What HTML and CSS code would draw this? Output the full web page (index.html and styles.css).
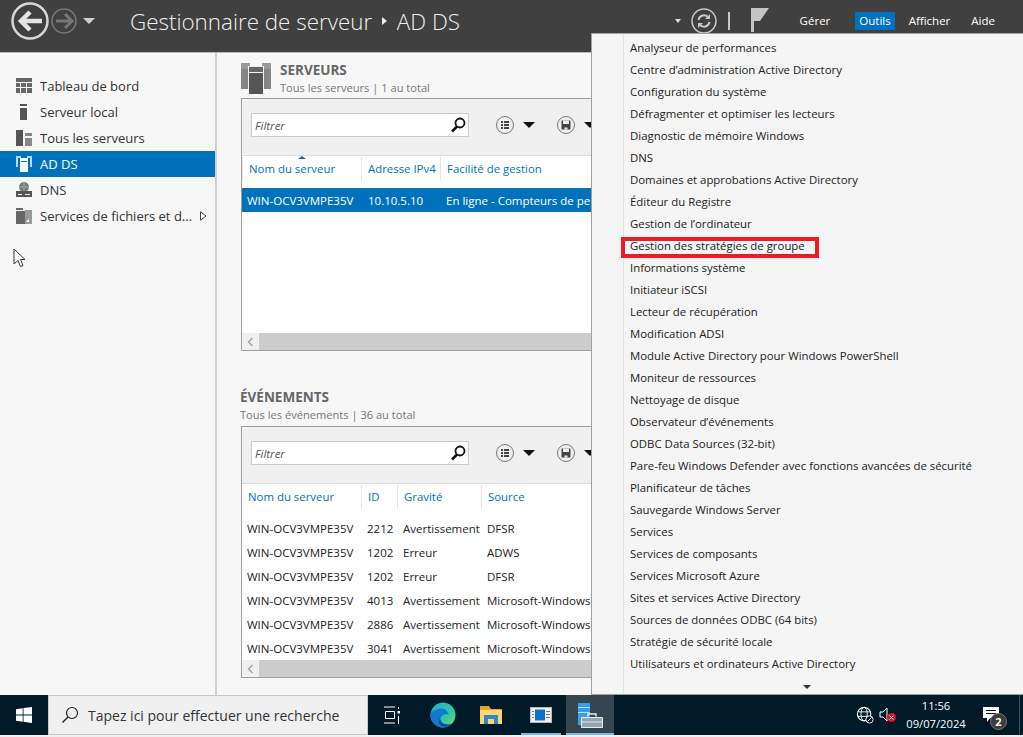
FILE: index.html
```html
<!DOCTYPE html>
<html lang="fr">
<head>
    <meta charset="UTF-8">
    <meta name="viewport" content="width=device-width, initial-scale=1.0">
    <title>Gestionnaire de serveur</title>
    <link rel="stylesheet" href="styles.css">
</head>
<body>
    <header class="topbar">
        <div class="nav">
            <svg class="nav-back" width="38" height="38" viewBox="0 0 38 38"><circle cx="19" cy="19" r="17.5" fill="none" stroke="#d8d8d8" stroke-width="2.5"/><path d="M31 19H12M19 10l-9 9 9 9" fill="none" stroke="#e4e4e4" stroke-width="4.5"/></svg>
            <svg class="nav-forward" width="26" height="26" viewBox="0 0 26 26"><circle cx="13" cy="13" r="12" fill="none" stroke="#777" stroke-width="1.6"/><path d="M5 13h15M14 6l7 7-7 7" fill="none" stroke="#777" stroke-width="3"/></svg>
            <span class="caret caret-light"></span>
        </div>
        <div class="title">Gestionnaire de serveur <span class="title-sep"></span> AD DS</div>
        <div class="actions">
            <span class="caret caret-small"></span>
            <svg class="refresh" width="26" height="26" viewBox="0 0 26 26"><circle cx="13" cy="13" r="12" fill="none" stroke="#c8c8c8" stroke-width="1.5"/><path d="M7.5 12a5.6 5.6 0 0 1 9.8-2.6M18.500 14a5.600 5.600 0 0 1-9.800 2.600" fill="none" stroke="#c8c8c8" stroke-width="2"/><path d="M19 6v5h-5zM7 20v-5h5z" fill="#c8c8c8"/></svg>
            <span class="divider"></span>
            <svg class="flag" width="18" height="24" viewBox="0 0 18 24"><path d="M0 0h3v24H0zM3 0h15L9 13H3z" fill="#c4c4c4"/></svg>
        </div>
        <nav class="menubar">
            <span class="menubar-item item-manage">Gérer</span>
            <span class="menubar-item is-open">Outils</span>
            <span class="menubar-item item-view">Afficher</span>
            <span class="menubar-item">Aide</span>
        </nav>
    </header>

    <div class="main">
        <aside class="sidebar">
            <div class="side-item">
                <svg class="side-icon" width="16" height="16" viewBox="0 0 16 16"><path d="M0 0h16v4H0zM0 5h4v4H0zM5 5h5v4H5zM11 5h5v4h-5zM0 10h4v5H0zM5 10h5v5H5zM11 10h5v5h-5z" fill="#666"/></svg>
                Tableau de bord
            </div>
            <div class="side-item">
                <svg class="side-icon" width="16" height="16" viewBox="0 0 16 16"><path d="M4 0h7v2H4zM4 4h7v12H4z" fill="#555"/></svg>
                Serveur local
            </div>
            <div class="side-item">
                <svg class="side-icon" width="16" height="16" viewBox="0 0 16 16"><path d="M0 0h7v16H0z" fill="#555"/><path d="M9 3h7v3H9zM9 8h7v8H9z" fill="#888"/></svg>
                Tous les serveurs
            </div>
            <div class="side-item is-active">
                <svg class="side-icon" width="16" height="16" viewBox="0 0 16 16"><path d="M0 0h5v2H2v9H0zM11 0h5v11h-2V2h-3z" fill="#b9d7ee"/><path d="M4 2h8v14H4z" fill="#fff"/><path d="M5 5h6v1H5z" fill="#0072bc"/></svg>
                AD DS
            </div>
            <div class="side-item">
                <svg class="side-icon" width="16" height="16" viewBox="0 0 16 16"><circle cx="8" cy="5" r="5" fill="#777"/><path d="M3 5h10M8 0v10" stroke="#aaa"/><path d="M0 9h16v6H0z" fill="#555"/><path d="M2 12h4v1H2zM9 12h5v1H9z" fill="#eee"/></svg>
                DNS
            </div>
            <div class="side-item">
                <svg class="side-icon" width="16" height="16" viewBox="0 0 16 16"><path d="M0 0h7v2H0zM0 3h10v13H0z" fill="#666"/><path d="M9 2h7v14H9z" fill="#999"/><path d="M13 11v3h-3z" fill="#fff"/></svg>
                <span class="side-label">Services de fichiers et d...</span>
                <svg class="side-arrow" width="7" height="10" viewBox="0 0 7 10"><path d="M.5.800v8.400L6 5z" fill="#fff" stroke="#444"/></svg>
            </div>
            <svg class="cursor" width="13" height="20" viewBox="0 0 13 20"><path d="M1 1v15l4-3.500 2.500 6 2.500-1-2.500-6H12z" fill="#fff" stroke="#333"/></svg>
        </aside>

        <section class="content">
            <div class="section-head has-icon">
                <svg class="section-icon" width="30" height="32" viewBox="0 0 30 32"><path d="M0 1h9v6H0zM21 1h9v6h-9z" fill="#9a9a9a"/><path d="M0 7h9v20H0zM21 7h9v20h-9z" fill="#858585"/><path d="M7 4h16v28H7z" fill="#f0f0f0"/><path d="M8 5h14v5H8z" fill="#666"/><path d="M8 11h14v21H8z" fill="#555"/></svg>
                <div>
                    <div class="section-title">SERVEURS</div>
                    <div class="section-sub">Tous les serveurs | 1 au total</div>
                </div>
            </div>
            <div class="panel panel-servers">
                <div class="toolbar">
                    <div class="filter">
                        <span>Filtrer</span>
                        <svg width="16" height="16" viewBox="0 0 16 16"><circle cx="10" cy="6" r="4.500" fill="none" stroke="#111" stroke-width="1.800"/><path d="M7 9.500L2 14.500" stroke="#111" stroke-width="2.500"/></svg>
                    </div>
                    <svg class="tool-icon" width="20" height="20" viewBox="0 0 20 20"><circle cx="10" cy="10" r="8.500" fill="none" stroke="#777"/><path d="M6 6h2v2H6zM9 6h5v2H9zM6 9h2v2H6zM9 9h5v2H9zM6 12h2v2H6zM9 12h5v2H9z" fill="#444"/></svg>
                    <span class="caret caret-dark"></span>
                    <svg class="tool-icon tool-save" width="20" height="20" viewBox="0 0 20 20"><circle cx="10" cy="10" r="8.500" fill="none" stroke="#777"/><path d="M5.500 5.500h9v9h-9z" fill="#444"/><path d="M7 5.500h6v3.500H7zM8.500 12.500h3v2h-3z" fill="#eee"/></svg>
                    <span class="caret caret-dark"></span>
                </div>
                <div class="grid-row grid-head cols-servers">
                    <span class="sort-arrow"></span>
                    <span>Nom du serveur</span>
                    <span>Adresse IPv4</span>
                    <span>Facilité de gestion</span>
                </div>
                <div class="grid-row grid-cells cols-servers is-selected">
                    <span>WIN-OCV3VMPE35V</span>
                    <span>10.10.5.10</span>
                    <span>En ligne - Compteurs de pe</span>
                </div>
                <div class="scrollbar"><span class="scroll-btn"><svg width="7" height="10" viewBox="0 0 7 10"><path d="M5.500 1L1.500 5l4 4" fill="none" stroke="#a0a0a0" stroke-width="1.300"/></svg></span></div>
            </div>

            <div class="section-head events-head">
                <div>
                    <div class="section-title">ÉVÉNEMENTS</div>
                    <div class="section-sub">Tous les événements | 36 au total</div>
                </div>
            </div>
            <div class="panel panel-events">
                <div class="toolbar">
                    <div class="filter">
                        <span>Filtrer</span>
                        <svg width="16" height="16" viewBox="0 0 16 16"><circle cx="10" cy="6" r="4.500" fill="none" stroke="#111" stroke-width="1.800"/><path d="M7 9.500L2 14.500" stroke="#111" stroke-width="2.500"/></svg>
                    </div>
                    <svg class="tool-icon" width="20" height="20" viewBox="0 0 20 20"><circle cx="10" cy="10" r="8.500" fill="none" stroke="#777"/><path d="M6 6h2v2H6zM9 6h5v2H9zM6 9h2v2H6zM9 9h5v2H9zM6 12h2v2H6zM9 12h5v2H9z" fill="#444"/></svg>
                    <span class="caret caret-dark"></span>
                    <svg class="tool-icon tool-save" width="20" height="20" viewBox="0 0 20 20"><circle cx="10" cy="10" r="8.500" fill="none" stroke="#777"/><path d="M5.500 5.500h9v9h-9z" fill="#444"/><path d="M7 5.500h6v3.500H7zM8.500 12.500h3v2h-3z" fill="#eee"/></svg>
                    <span class="caret caret-dark"></span>
                </div>
                <div class="grid-row grid-head cols-events">
                    <span>Nom du serveur</span>
                    <span>ID</span>
                    <span>Gravité</span>
                    <span>Source</span>
                </div>
                <div class="grid-row grid-cells cols-events"><span>WIN-OCV3VMPE35V</span><span>2212</span><span>Avertissement</span><span>DFSR</span></div>
                <div class="grid-row grid-cells cols-events"><span>WIN-OCV3VMPE35V</span><span>1202</span><span>Erreur</span><span>ADWS</span></div>
                <div class="grid-row grid-cells cols-events"><span>WIN-OCV3VMPE35V</span><span>1202</span><span>Erreur</span><span>DFSR</span></div>
                <div class="grid-row grid-cells cols-events"><span>WIN-OCV3VMPE35V</span><span>4013</span><span>Avertissement</span><span>Microsoft-Windows</span></div>
                <div class="grid-row grid-cells cols-events"><span>WIN-OCV3VMPE35V</span><span>2886</span><span>Avertissement</span><span>Microsoft-Windows</span></div>
                <div class="grid-row grid-cells cols-events"><span>WIN-OCV3VMPE35V</span><span>3041</span><span>Avertissement</span><span>Microsoft-Windows</span></div>
                <div class="scrollbar"><span class="scroll-btn"><svg width="7" height="10" viewBox="0 0 7 10"><path d="M5.500 1L1.500 5l4 4" fill="none" stroke="#a0a0a0" stroke-width="1.300"/></svg></span></div>
            </div>
        </section>
    </div>

    <div class="tools-menu">
        <div class="tools-item">Analyseur de performances</div>
        <div class="tools-item">Centre d’administration Active Directory</div>
        <div class="tools-item">Configuration du système</div>
        <div class="tools-item">Défragmenter et optimiser les lecteurs</div>
        <div class="tools-item">Diagnostic de mémoire Windows</div>
        <div class="tools-item">DNS</div>
        <div class="tools-item">Domaines et approbations Active Directory</div>
        <div class="tools-item">Éditeur du Registre</div>
        <div class="tools-item">Gestion de l’ordinateur</div>
        <div class="tools-item is-marked">Gestion des stratégies de groupe</div>
        <div class="tools-item">Informations système</div>
        <div class="tools-item">Initiateur iSCSI</div>
        <div class="tools-item">Lecteur de récupération</div>
        <div class="tools-item">Modification ADSI</div>
        <div class="tools-item">Module Active Directory pour Windows PowerShell</div>
        <div class="tools-item">Moniteur de ressources</div>
        <div class="tools-item">Nettoyage de disque</div>
        <div class="tools-item">Observateur d’événements</div>
        <div class="tools-item">ODBC Data Sources (32-bit)</div>
        <div class="tools-item">Pare-feu Windows Defender avec fonctions avancées de sécurité</div>
        <div class="tools-item">Planificateur de tâches</div>
        <div class="tools-item">Sauvegarde Windows Server</div>
        <div class="tools-item">Services</div>
        <div class="tools-item">Services de composants</div>
        <div class="tools-item">Services Microsoft Azure</div>
        <div class="tools-item">Sites et services Active Directory</div>
        <div class="tools-item">Sources de données ODBC (64 bits)</div>
        <div class="tools-item">Stratégie de sécurité locale</div>
        <div class="tools-item">Utilisateurs et ordinateurs Active Directory</div>
        <div class="tools-more"><span class="caret caret-dark caret-tiny"></span></div>
    </div>

    <footer class="taskbar">
        <div class="start">
            <svg width="16" height="16" viewBox="0 0 16 16"><path d="M0 2.200l6.700-1v6.300H0zM7.500 1l8.500-1v7.500H7.500zM0 8.500h6.700v6.300l-6.700-1zM7.500 8.500H16V16l-8.500-1.200z" fill="#fff"/></svg>
        </div>
        <div class="search">
            <svg width="18" height="18" viewBox="0 0 18 18"><circle cx="11" cy="7" r="5.500" fill="none" stroke="#222" stroke-width="1.200"/><path d="M7 11l-5.500 5.500" stroke="#222" stroke-width="1.500"/></svg>
            <span>Tapez ici pour effectuer une recherche</span>
        </div>
        <div class="task-apps">
            <div class="task-app task-view">
                <svg width="18" height="18" viewBox="0 0 18 18"><path d="M1 1h11M1 17h11M2.500 5.500h9v7h-9z" fill="none" stroke="#fff"/><path d="M15 1h1v2h-1zM14.500 5h2.500v2.500h-2.500zM15 10h1v8h-1z" fill="#fff"/></svg>
            </div>
            <div class="task-app">
                <svg width="26" height="26" viewBox="0 0 26 26"><defs><linearGradient id="edgeTop" x1="0" y1="0" x2="1" y2="1"><stop offset="0" stop-color="#1fa8d8"/><stop offset=".6" stop-color="#35c7a5"/><stop offset="1" stop-color="#6fdc5c"/></linearGradient></defs><circle cx="13" cy="13" r="12.500" fill="url(#edgeTop)"/><path d="M.5 13C.5 20 6 25.500 13 25.500c3.500 0 6.500-1.300 8.500-3.500-6 2.500-11-1-11-5 0-3.500 4-5.500 8-4.500-1-5-6-7-10-5.500C5 8 .5 9.500.5 13z" fill="#1478cc"/><path d="M10 16.500c0 4 5 7 11.500 5.500-3 2.800-8 3.500-10.500 1.500C8.500 22 8.500 18.500 10 16.500z" fill="#0a4a9c"/></svg>
            </div>
            <div class="task-app">
                <svg width="22" height="18" viewBox="0 0 22 18"><path d="M0 0h9l2 3h11v15H0z" fill="#e0a526"/><path d="M0 4h22v14H0z" fill="#ffd767"/><path d="M4 9h14v9H4z" fill="#2d86cf"/><path d="M8 13h6v5H8z" fill="#ffd767"/></svg>
            </div>
            <div class="task-app is-running">
                <svg width="22" height="16" viewBox="0 0 22 16"><path d="M0 0h22v16H0z" fill="#b8b8b8"/><path d="M1 1h20v14H1z" fill="#f3f3f3"/><path d="M5 2.500h10v11H5z" fill="#0a73d0"/><path d="M2 4h2v1H2zM2 7h2v1H2zM2 10h2v1H2zM16 4h4v1h-4zM16 7h4v1h-4zM16 10h4v1h-4z" fill="#777"/></svg>
            </div>
            <div class="task-app is-current">
                <svg width="26" height="26" viewBox="0 0 26 26"><path d="M1 1h12v22H1z" fill="#35a0ea"/><path d="M1 5h12v1H1zM1 10h12v1H1z" fill="#b5dcf7"/><path d="M4.500 15.500h21v10h-21z" fill="#8fa6b4" stroke="#e6ecef"/><path d="M11 14.500v-2.500h8v2.500" fill="none" stroke="#e6ecef" stroke-width="1.500"/><path d="M5 19.500h20v1H5z" fill="#dfe7eb"/></svg>
            </div>
        </div>
        <div class="tray">
            <svg class="tray-globe" width="18" height="18" viewBox="0 0 20 20"><circle cx="9" cy="9" r="7.500" fill="none" stroke="#fff" stroke-width="1.200"/><ellipse cx="9" cy="9" rx="3.500" ry="7.500" fill="none" stroke="#fff"/><path d="M2 6.500h14M2 11.500h14" stroke="#fff"/><circle cx="15" cy="15" r="4" fill="#001a28" stroke="#fff"/><path d="M12.500 17.500l5-5" stroke="#fff"/></svg>
            <svg class="tray-sound" width="18" height="16" viewBox="0 0 18 16"><path d="M1 5h3l4-4v13l-4-4H1z" fill="none" stroke="#fff"/><circle cx="12.500" cy="10.500" r="4.500" fill="#e81123"/><path d="M10.500 8.500l4 4M14.500 8.500l-4 4" stroke="#fff"/></svg>
            <div class="clock">
                <div>11:56</div>
                <div>09/07/2024</div>
            </div>
            <div class="notify">
                <svg width="18" height="16" viewBox="0 0 18 16"><path d="M0 0h16v11H7l-3 4v-4H0z" fill="#fff"/><path d="M3 3h10v1H3zM3 6h10v1H3z" fill="#001a28"/></svg>
                <span class="notify-badge">2</span>
            </div>
            <span class="tray-edge"></span>
        </div>
    </footer>
</body>
</html>
```

FILE: styles.css
```css
* {
    box-sizing: border-box;
}

body {
    font-family: "Open Sans", "Noto Sans", sans-serif;
    font-size: 11.5px;
    margin: 0;
    width: 1023px;
    height: 737px;
    overflow: hidden;
    background: #f0f0f0;
    color: #222;
    display: flex;
    flex-direction: column;
    position: relative;
}

.caret {
    display: inline-block;
    width: 0;
    height: 0;
    border-left: 6px solid transparent;
    border-right: 6px solid transparent;
    border-top: 6px solid #111;
}

.caret-light {
    border-top-color: #d0d0d0;
    margin-left: 4px;
}

.caret-small {
    border-width: 4px 3.5px 0;
    border-top-color: #ddd;
}

.caret-dark {
    border-top-color: #111;
}

.caret-tiny {
    border-width: 4px 4px 0;
    border-top-color: #333;
}

/* top bar */
.topbar {
    height: 53px;
    flex: none;
    background: #404040;
    border-bottom: 1px solid #bbb;
    display: flex;
    align-items: flex-start;
}

.nav {
    width: 130px;
    height: 42px;
    padding-left: 11px;
    display: flex;
    align-items: center;
    gap: 2px;
    flex: none;
}

.title {
    font-weight: 300;
    font-size: 22.4px;
    line-height: 44px;
    color: #f0f0f0;
    white-space: nowrap;
}

.title-sep {
    display: inline-block;
    width: 0;
    height: 0;
    margin: 0 4px 5px 4px;
    border-top: 4px solid transparent;
    border-bottom: 4px solid transparent;
    border-left: 5px solid #eee;
}

.actions {
    margin-left: auto;
    height: 42px;
    display: flex;
    align-items: center;
}

.refresh {
    margin-left: 10px;
}

.divider {
    width: 2px;
    height: 18px;
    margin-left: 11px;
    background: #c8c8c8;
}

.flag {
    margin-left: 21px;
    margin-top: -2px;
}

.menubar {
    display: flex;
    margin-left: 27px;
    padding-top: 12px;
    padding-right: 24px;
    color: #fff;
    font-size: 11.5px;
}

.menubar-item {
    height: 18px;
    line-height: 18px;
    padding: 0 4px;
    margin-right: 16px;
}

.menubar-item:last-child {
    margin-right: 0;
}

.menubar-item.item-manage {
    margin-right: 21px;
}

.menubar-item.item-view {
    margin-right: 13px;
}

.menubar-item.is-open {
    background: #0072c0;
    margin-right: 10px;
}

/* left column */
.main {
    height: 642px;
    flex: none;
    background: #f7f7f7;
    display: flex;
}

.sidebar {
    width: 217px;
    flex: none;
    padding-top: 20px;
    border-right: 2px solid #cfcfcf;
    color: #333;
    font-size: 13px;
}

.side-item {
    height: 26px;
    padding-left: 16px;
    display: flex;
    align-items: center;
    white-space: nowrap;
}

.side-item.is-active {
    background: #0072bc;
    color: #fff;
}

.side-icon {
    margin-right: 8px;
    flex: none;
}

.side-label {
    flex: none;
}

.side-arrow {
    margin-left: 8px;
    flex: none;
}

.cursor {
    display: block;
    margin: 19px 0 0 13px;
}

/* centre */
.content {
    width: 374px;
    flex: none;
    overflow: hidden;
    padding-left: 24px;
}

.section-head {
    height: 45px;
    display: flex;
    gap: 9px;
    align-items: flex-start;
    padding-top: 9px;
}

.section-icon {
    flex: none;
}

.section-title {
    font-weight: 700;
    font-size: 13.5px;
    line-height: 17px;
    color: #666;
}

.section-sub {
    font-size: 11.1px;
    line-height: 18px;
    color: #777;
}

.events-head {
    height: 75px;
    padding-top: 38px;
    margin-left: -1px;
}

.panel {
    width: 351px;
    background: #fff;
    border: 1px solid #a0a0a0;
    border-right: 0;
    display: flex;
    flex-direction: column;
}

.panel-servers {
    height: 253px;
}

.panel-events {
    height: 252px;
}

.toolbar {
    height: 57px;
    flex: none;
    background: #f0f0f0;
    border-bottom: 1px solid #ddd;
    padding: 14px 0 0 9px;
    display: flex;
    align-items: flex-start;
}

.filter {
    width: 218px;
    height: 24px;
    flex: none;
    background: #fff;
    border: 1px solid #ccc;
    padding: 0 2px 0 3px;
    display: flex;
    align-items: center;
    justify-content: space-between;
    font-style: italic;
    color: #555;
}

.tool-icon {
    margin: 2px 0 0 26px;
    flex: none;
}

.tool-save {
    margin-left: 21px;
}

.toolbar .caret {
    margin: 9px 0 0 8px;
    flex: none;
}

.grid-row {
    display: grid;
    align-items: center;
    white-space: nowrap;
}

.grid-row span {
    overflow: hidden;
}

.cols-servers {
    grid-template-columns: 119px 79px 1fr;
}

.cols-events {
    grid-template-columns: 119px 36px 84px 1fr;
}

.grid-head {
    height: 32px;
    color: #0072bc;
    position: relative;
    padding-bottom: 7px;
    font-size: 11.4px;
}

.grid-head span {
    padding-left: 6px;
    border-left: 1px solid #e6e6e6;
    line-height: 24px;
}

.grid-head span:first-of-type {
    border-left: 0;
}

.sort-arrow {
    position: absolute;
    left: 56px;
    top: 0;
    width: 0;
    padding: 0 !important;
    border-left: 4px solid transparent !important;
    border-right: 4px solid transparent;
    border-bottom: 3px solid #0072bc;
    line-height: 0 !important;
}

.grid-cells {
    height: 24px;
}

.grid-cells span {
    padding-left: 5px;
}

.grid-cells span + span {
    padding-left: 6px;
}

.cols-servers.grid-cells span:nth-child(2) {
    padding-left: 7px;
}

.is-selected {
    background: #0072bc;
    color: #fff;
}

.scrollbar {
    margin-top: auto;
    height: 17px;
    flex: none;
    background: #cdcdcd;
}

.scroll-btn {
    width: 17px;
    height: 17px;
    display: flex;
    align-items: center;
    justify-content: center;
    background: #f0f0f0;
}

/* Outils dropdown */
.tools-menu {
    position: absolute;
    left: 591px;
    top: 33px;
    width: 432px;
    height: 662px;
    padding: 3px 0 0 31px;
    background: linear-gradient(to right, #f5f5f5 31px, #e3e3e3 31px, #e3e3e3 32px, #f5f5f5 32px);
    border-left: 1px solid #a0a0a0;
    border-top: 1px solid #a0a0a0;
    border-bottom: 1px solid #a0a0a0;
    font-size: 11.4px;
    color: #222;
}

.tools-item {
    height: 22px;
    line-height: 22px;
    padding-left: 7px;
    position: relative;
    white-space: nowrap;
}

.tools-item.is-marked::after {
    content: "";
    box-sizing: border-box;
    position: absolute;
    left: -2px;
    top: 2px;
    width: 198px;
    height: 21px;
    border: 4px solid #ed1c24;
}

.tools-more {
    padding: 6px 0 0 180px;
    line-height: 8px;
}

/* task bar */
.taskbar {
    height: 40px;
    flex: none;
    background: #001a28;
    color: #fff;
    display: flex;
    align-items: stretch;
}

.start {
    width: 48px;
    display: flex;
    align-items: center;
    justify-content: center;
    flex: none;
}

.search {
    width: 320px;
    flex: none;
    background: #f0f0f0;
    border: 1px solid #c8c8c8;
    padding-left: 12px;
    display: flex;
    align-items: center;
    gap: 9px;
    font-size: 14px;
    color: #333;
}

.task-apps {
    display: flex;
}

.task-app {
    width: 48px;
    display: flex;
    align-items: center;
    justify-content: center;
    border-bottom: 2px solid transparent;
    padding-top: 1px;
}

.task-view {
    margin-right: 3px;
}

.task-app.is-running {
    width: 40px;
    border-bottom-color: #76b9ed;
    margin: 0 5px 0 6px;
}

.task-app.is-current {
    border-bottom-color: #76b9ed;
    background: #364651;
}

.tray {
    margin-left: auto;
    display: flex;
    align-items: center;
}

.tray-globe {
    margin-right: 5px;
}

.clock {
    width: 64px;
    margin: 0 15px 0 7px;
    text-align: center;
    font-size: 11.2px;
    line-height: 18px;
}

.notify {
    width: 36px;
    position: relative;
    display: flex;
    align-items: center;
    height: 100%;
}

.notify-badge {
    position: absolute;
    left: 7px;
    top: 18px;
    width: 17px;
    height: 17px;
    border-radius: 50%;
    background: #3c3c3c;
    border: 1px solid #777;
    font-weight: 700;
    font-size: 11px;
    line-height: 15px;
    text-align: center;
}

.tray-edge {
    width: 1px;
    height: 100%;
    background: #44525c;
    margin-right: 3px;
}
```
